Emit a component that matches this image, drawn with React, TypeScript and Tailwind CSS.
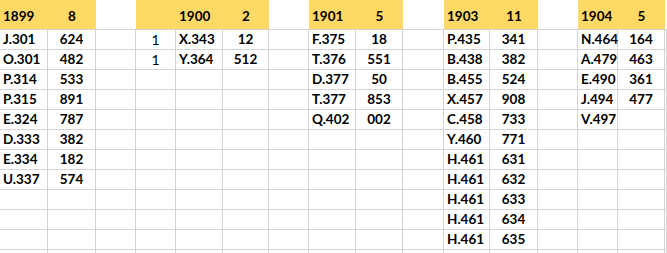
const COLS =
  "grid-cols-[48px_48px_40px_40px_47px_46px_40px_47px_47px_41px_46px_48px_40px_40px_47px_1fr]";

type Kind = "label" | "num" | "one" | "blank";

// kind of each column, 16 in all
const kinds: Kind[] = [
  "label", "num", "blank",
  "one", "label", "num", "blank",
  "label", "num", "blank",
  "label", "num", "blank",
  "label", "num", "blank",
];

const header: (string | null)[] = [
  "1899", "8", null,
  "", "1900", "2", null,
  "1901", "5", null,
  "1903", "11", null,
  "1904", "5", null,
];

const blocks: [number, string[][]][] = [
  [0, [["J.301", "624"], ["O.301", "482"], ["P.314", "533"], ["P.315", "891"], ["E.324", "787"], ["D.333", "382"], ["E.334", "182"], ["U.337", "574"]]],
  [3, [["1", "X.343", "12"], ["1", "Y.364", "512"]]],
  [7, [["F.375", "18"], ["T.376", "551"], ["D.377", "50"], ["T.377", "853"], ["Q.402", "002"]]],
  [10, [["P.435", "341"], ["B.438", "382"], ["B.455", "524"], ["X.457", "908"], ["C.458", "733"], ["Y.460", "771"], ["H.461", "631"], ["H.461", "632"], ["H.461", "633"], ["H.461", "634"], ["H.461", "635"]]],
  [13, [["N.464", "164"], ["A.479", "463"], ["E.490", "361"], ["J.494", "477"], ["V.497", ""]]],
];

const ROWS = 12;

function buildRows() {
  const rows: string[][] = Array.from({ length: ROWS }, () => Array(16).fill(""));
  for (const [start, data] of blocks) {
    data.forEach((r, i) => r.forEach((v, j) => (rows[i][start + j] = v)));
  }
  return rows;
}

function align(kind: Kind) {
  if (kind === "label") return "justify-start pl-[3px] font-bold";
  if (kind === "num") return "justify-center font-bold";
  if (kind === "one") return "justify-center font-normal text-[14px]";
  return "justify-center font-normal";
}

export default function App() {
  const rows = buildRows();
  return (
    <div
      className="h-[253px] w-[667px] overflow-hidden bg-white text-[13.5px] text-black"
      style={{ fontFamily: "Lato, 'Liberation Sans', sans-serif" }}
    >
      <div className={`grid ${COLS}`}>
        {header.map((h, i) => (
          <div
            key={`h${i}`}
            className={`flex h-[30px] items-center pt-[3px] border-b border-[#d4d4d4] whitespace-nowrap ${
              h === null ? "bg-white" : "bg-[#ffd966]"
            } ${align(kinds[i])} font-bold`}
          >
            {h}
          </div>
        ))}
        {rows.map((r, ri) =>
          r.map((v, ci) => (
            <div
              key={`${ri}-${ci}`}
              className={`flex h-[20px] items-center border-b border-r border-[#d4d4d4] whitespace-nowrap ${align(kinds[ci])}`}
            >
              {v}
            </div>
          ))
        )}
      </div>
    </div>
  );
}
